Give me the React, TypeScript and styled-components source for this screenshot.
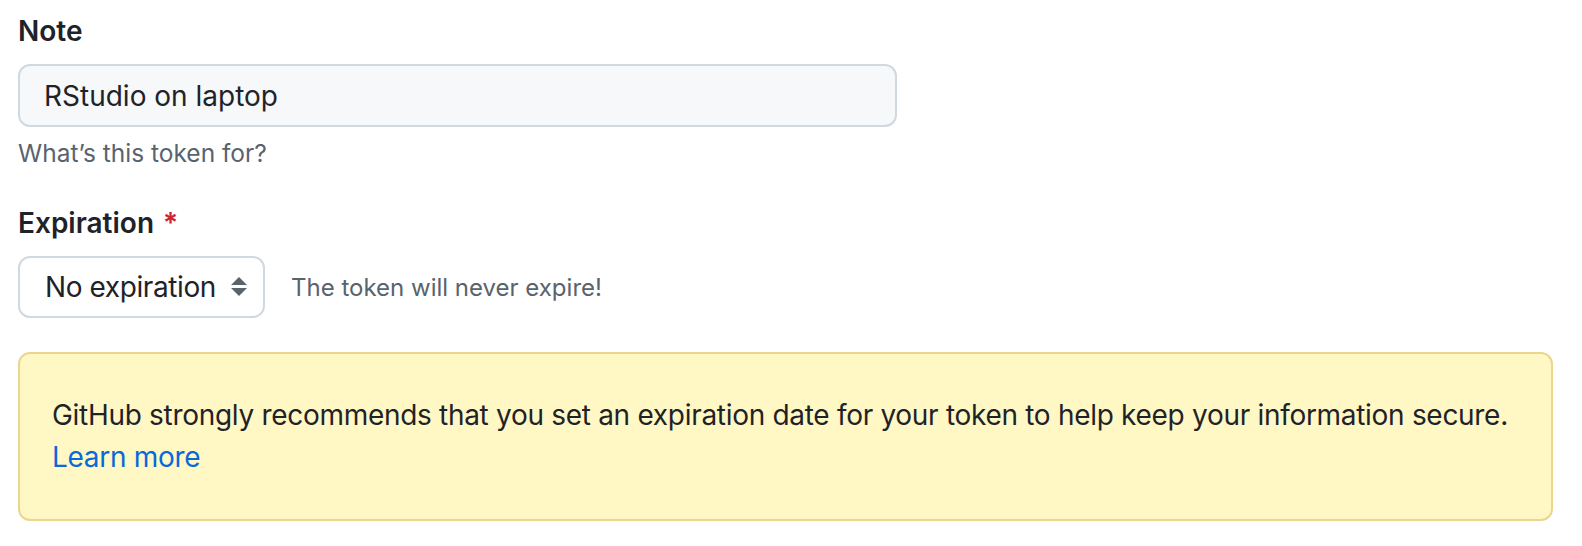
import styled, { createGlobalStyle } from "styled-components";

const GlobalStyle = createGlobalStyle`
  body {
    margin: 0;
    background: #ffffff;
    font-family: Inter, "Noto Sans", "Liberation Sans", sans-serif;
    color: #1f2328;
  }
`;

const Page = styled.div`
  padding: 10px 29px 0 18px;
`;

const FormGroup = styled.div`
  display: flex;
  flex-direction: column;
  align-items: flex-start;
  margin-bottom: 31px;
`;

const Label = styled.label`
  font-size: 28px;
  font-weight: 600;
  line-height: 42px;
  margin-bottom: 12px;
`;

const Required = styled.span`
  color: #d1242f;
  margin-left: 9px;
`;

const TextInput = styled.div`
  box-sizing: border-box;
  width: 879px;
  height: 63px;
  padding: 0 24px;
  display: flex;
  align-items: center;
  background: #f6f8fa;
  border: 2px solid #d1d9e0;
  border-radius: 12px;
  font-size: 28px;
`;

const Hint = styled.p`
  margin: 8px 0 0;
  font-size: 24.5px;
  line-height: 36px;
  color: #59636e;
`;

const SelectRow = styled.div`
  display: flex;
  align-items: center;
  gap: 26px;
`;

const Select = styled.div`
  box-sizing: border-box;
  width: 247px;
  height: 62px;
  padding: 0 16px 0 25px;
  display: flex;
  align-items: center;
  justify-content: space-between;
  background: #ffffff;
  border: 2px solid #d1d9e0;
  border-radius: 12px;
  font-size: 28px;
  letter-spacing: -0.4px;
  white-space: nowrap;
`;

const InlineNote = styled.span`
  font-size: 24px;
  color: #59636e;
`;

const Flash = styled.div`
  box-sizing: border-box;
  margin-top: 34px;
  padding: 40px 32px 41px;
  background: #fff8c5;
  border: 2px solid #ecd58f;
  border-radius: 12px;
  font-size: 28px;
  letter-spacing: -0.3px;
  line-height: 42px;
`;

const Link = styled.a`
  color: #0969da;
  text-decoration: none;
`;

const UpDown = () => (
  <svg width="16" height="20" viewBox="0 0 16 20" fill="#59636e">
    <path d="M8 0 L16 8 L0 8 Z" />
    <path d="M0 11 L16 11 L8 19 Z" />
  </svg>
);

export default function App() {
  return (
    <>
      <GlobalStyle />
      <Page>
        <FormGroup>
          <Label>Note</Label>
          <TextInput>RStudio on laptop</TextInput>
          <Hint>What’s this token for?</Hint>
        </FormGroup>
        <FormGroup>
          <Label>
            Expiration<Required>*</Required>
          </Label>
          <SelectRow>
            <Select>
              <span>No expiration</span>
              <UpDown />
            </Select>
            <InlineNote>The token will never expire!</InlineNote>
          </SelectRow>
        </FormGroup>
        <Flash>
          GitHub strongly recommends that you set an expiration date for your
          token to help keep your information secure.
          <br />
          <Link href="#">Learn more</Link>
        </Flash>
      </Page>
    </>
  );
}
